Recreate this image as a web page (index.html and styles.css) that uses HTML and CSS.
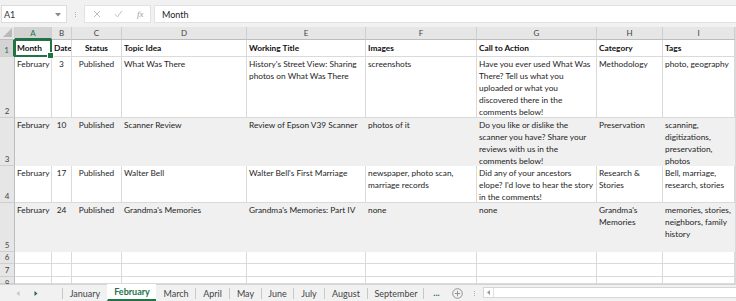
FILE: index.html
```html
<!DOCTYPE html>
<html>
<head>
<meta charset="utf-8">
<link rel="stylesheet" href="styles.css">
</head>
<body>
<div class="app">
  <div class="fbar">
    <div class="namebox"><span>A1</span><svg class="dd" width="6" height="4" viewBox="0 0 6 4"><path d="M0 0 L6 0 L3 3.5 Z" fill="#8a8a8a"/></svg></div>
    <div class="vdots"><i></i><i></i><i></i></div>
    <div class="fxbtns">
      <svg width="8" height="8" viewBox="0 0 8 8"><path d="M1 1 L7 7 M7 1 L1 7" stroke="#b5b5b5" stroke-width="0.9" fill="none"/></svg>
      <svg width="9" height="8" viewBox="0 0 9 8"><path d="M1 4.3 L3.4 6.8 L8 1" stroke="#b5b5b5" stroke-width="0.9" fill="none"/></svg>
      <span class="fx">fx</span>
    </div>
    <div class="formula">Month</div>
  </div>

  <div class="grid">
    <div class="corner"><svg width="9" height="9" viewBox="0 0 9 9"><path d="M9 0 L9 9 L0 9 Z" fill="#b9b9b9"/></svg></div>
    <div class="ch active">A</div><div class="ch">B</div><div class="ch">C</div><div class="ch">D</div><div class="ch">E</div><div class="ch">F</div><div class="ch">G</div><div class="ch">H</div><div class="ch">I</div>

    <div class="rh active">1</div>
    <div class="c hd sel">Month</div>
    <div class="c hd">Date</div>
    <div class="c hd ctr">Status</div>
    <div class="c hd">Topic Idea</div>
    <div class="c hd">Working Title</div>
    <div class="c hd">Images</div>
    <div class="c hd">Call to Action</div>
    <div class="c hd">Category</div>
    <div class="c hd">Tags</div>

    <div class="rh">2</div>
    <div class="c">February</div>
    <div class="c ctr">3</div>
    <div class="c ctr">Published</div>
    <div class="c">What Was There</div>
    <div class="c">History's Street View: Sharing<br>photos on What Was There</div>
    <div class="c">screenshots</div>
    <div class="c">Have you ever used What Was<br>There? Tell us what you<br>uploaded or what you<br>discovered there in the<br>comments below!</div>
    <div class="c">Methodology</div>
    <div class="c">photo, geography</div>

    <div class="rh">3</div>
    <div class="c g">February</div>
    <div class="c g ctr">10</div>
    <div class="c g ctr">Published</div>
    <div class="c g">Scanner Review</div>
    <div class="c g">Review of Epson V39 Scanner</div>
    <div class="c g">photos of it</div>
    <div class="c g">Do you like or dislike the<br>scanner you have? Share your<br>reviews with us in the<br>comments below!</div>
    <div class="c g">Preservation</div>
    <div class="c g">scanning,<br>digitizations,<br>preservation,<br>photos</div>

    <div class="rh">4</div>
    <div class="c">February</div>
    <div class="c ctr">17</div>
    <div class="c ctr">Published</div>
    <div class="c">Walter Bell</div>
    <div class="c">Walter Bell's First Marriage</div>
    <div class="c">newspaper, photo scan,<br>marriage records</div>
    <div class="c">Did any of your ancestors<br>elope? I'd love to hear the story<br>in the comments!</div>
    <div class="c">Research &amp;<br>Stories</div>
    <div class="c">Bell, marriage,<br>research, stories</div>

    <div class="rh">5</div>
    <div class="c g">February</div>
    <div class="c g ctr">24</div>
    <div class="c g ctr">Published</div>
    <div class="c g">Grandma's Memories</div>
    <div class="c g">Grandma's Memories: Part IV</div>
    <div class="c g">none</div>
    <div class="c g">none</div>
    <div class="c g">Grandma's<br>Memories</div>
    <div class="c g">memories, stories,<br>neighbors, family<br>history</div>

    <div class="rh">6</div>
    <div class="c"></div><div class="c"></div><div class="c"></div><div class="c"></div><div class="c"></div><div class="c"></div><div class="c"></div><div class="c"></div><div class="c"></div>
    <div class="rh">7</div>
    <div class="c"></div><div class="c"></div><div class="c"></div><div class="c"></div><div class="c"></div><div class="c"></div><div class="c"></div><div class="c"></div><div class="c"></div>
    <div class="rh cut">8</div>
    <div class="c"></div><div class="c"></div><div class="c"></div><div class="c"></div><div class="c"></div><div class="c"></div><div class="c"></div><div class="c"></div><div class="c"></div>
  </div>

  <div class="tabs">
    <div class="nav">
      <svg width="4" height="5" viewBox="0 0 4 5"><path d="M3.5 0 L3.5 5 L0.5 2.5 Z" fill="#c4c4c4"/></svg>
      <svg width="4" height="5" viewBox="0 0 4 5"><path d="M0.5 0 L0.5 5 L3.5 2.5 Z" fill="#2a6a45"/></svg>
    </div>
    <div class="tab w45">January</div>
    <div class="tab w49 on">February</div>
    <div class="tab w39">March</div>
    <div class="tab w34">April</div>
    <div class="tab w32">May</div>
    <div class="tab w32">June</div>
    <div class="tab w31">July</div>
    <div class="tab w43">August</div>
    <div class="tab w57">September</div>
    <div class="more">...</div>
    <div class="add"><svg width="11" height="11" viewBox="0 0 11 11"><circle cx="5.5" cy="5.5" r="4.8" fill="none" stroke="#8a8a8a" stroke-width="0.9"/><path d="M5.5 2.8 V8.2 M2.8 5.5 H8.2" stroke="#8a8a8a" stroke-width="0.9"/></svg></div>
    <div class="vdots small"><i></i><i></i><i></i></div>
    <div class="hscroll">
      <div class="arr"><svg width="3" height="5" viewBox="0 0 3 5"><path d="M3 0 L3 5 L0 2.5 Z" fill="#9a9a9a"/></svg></div>
      <div class="track"></div>
    </div>
  </div>
</div>
</body>
</html>
```

FILE: styles.css
```css
* { box-sizing: border-box; }
html, body { margin: 0; padding: 0; background: #fff; }
body { width: 736px; height: 301px; overflow: hidden; }
.app { width: 736px; height: 301px; display: flex; flex-direction: column; background: #f1f1f1; font-family: "Lato", "Open Sans", sans-serif; }

/* formula bar */
.fbar { height: 27px; display: flex; align-items: flex-start; padding-top: 5px; background: #f1f1f1; }
.namebox { width: 66px; height: 18px; margin-left: 1px; background: #fff; border: 1px solid #dcdcdc; display: flex; align-items: center; justify-content: space-between; padding: 0 5px 0 2px; font-size: 9px; color: #333; }
.namebox .dd { margin-top: 1px; }
.vdots { width: 17px; height: 18px; display: flex; flex-direction: column; align-items: center; justify-content: center; gap: 1px; }
.vdots i { display: block; width: 1px; height: 1px; background: #b0b0b0; }
.fxbtns { width: 67px; height: 18px; background: #fff; border: 1px solid #e2e2e2; display: flex; align-items: center; padding-left: 8px; gap: 13px; }
.fxbtns .fx { font-family: "Liberation Serif", serif; font-style: italic; font-size: 9px; color: #9a9a9a; margin-left: 1px; }
.formula { flex: 1; height: 18px; margin-left: 3px; background: #fff; border: 1px solid #e2e2e2; border-right: none; font-size: 9px; color: #222; display: flex; align-items: center; padding-left: 7px; }

/* grid */
.grid { display: grid; grid-template-columns: 15px 37px 20px 50px 125px 119px 111px 120px 66px 72px; grid-template-rows: 13px 17px 61px 48px 37px 49px 12px 13px 7px; width: 736px; height: 257px; background: #fff; overflow: hidden; border-right: 1px solid #dadada; }
.corner { background: #e6e6e6; border-right: 1px solid #cfcfcf; border-bottom: 1px solid #bdbdbd; display: flex; align-items: flex-end; justify-content: flex-end; padding: 0 2px 2px 0; }
.ch { background: #e6e6e6; border-right: 1px solid #cfcfcf; border-bottom: 1px solid #bdbdbd; font-size: 8px; color: #444; text-align: center; line-height: 12px; }
.ch.active { background: #d3d3d3; color: #217346; border-bottom: 2px solid #217346; }
.rh { background: #e6e6e6; border-right: 1px solid #bdbdbd; border-bottom: 1px solid #cfcfcf; font-size: 8px; color: #444; display: flex; align-items: flex-end; justify-content: center; padding-bottom: 1px; line-height: 10px; }
.rh.active { background: #d3d3d3; color: #217346; border-right: 2px solid #217346; }
.rh.cut { align-items: flex-start; padding-top: 1px; }

.c { border-right: 1px solid #dadada; border-bottom: 1px solid #dadada; font-size: 8.3px; line-height: 12px; color: #1e1e1e; padding: 1px 0 0 2px; white-space: nowrap; overflow: hidden; }
.c.ctr { text-align: center; padding-left: 0; }
.c.hd { font-weight: 700; display: flex; align-items: flex-end; padding-bottom: 2px; color: #111; }
.c.hd.ctr { justify-content: center; }
.c.g { background: #f0f0f0; border-right-color: #f0f0f0; border-bottom-color: #f0f0f0; }
.c.sel { position: relative; overflow: visible; }
.c.sel::after { content: ""; position: absolute; left: -1px; top: -1px; right: -1px; bottom: -1px; border: 2px solid #217346; }
.c.sel::before { content: ""; position: absolute; right: -3px; bottom: -3px; width: 5px; height: 5px; background: #217346; border: 1px solid #fff; z-index: 2; }

/* tabs */
.tabs { height: 17px; display: flex; align-items: stretch; background: #f1f1f1; border-top: 1px solid #d4d4d4; font-size: 9px; color: #444; }
.nav { width: 62px; display: flex; align-items: center; padding-left: 16px; gap: 14px; }
.tab { display: flex; align-items: center; justify-content: center; position: relative; border-left: 1px solid transparent; }
.tab::before { content: ""; position: absolute; left: -1px; top: 3px; height: 11px; width: 1px; background: #c8c8c8; }
.tab.on { background: #fff; color: #217346; font-weight: 700; border-bottom: 2px solid #217346; margin-top: -1px; }
.tab.on::before, .tab.on + .tab::before { display: none; }
.w45 { width: 45px; } .w49 { width: 49px; } .w39 { width: 39px; } .w34 { width: 34px; } .w32 { width: 32px; } .w31 { width: 31px; } .w43 { width: 43px; } .w57 { width: 57px; }
.more { width: 25px; position: relative; display: flex; align-items: center; justify-content: center; color: #217346; font-weight: 700; font-size: 9px; padding-bottom: 2px; }
.more::before { content: ""; position: absolute; left: -1px; top: 3px; height: 11px; width: 1px; background: #c8c8c8; }
.add { width: 16px; display: flex; align-items: center; justify-content: center; }
.vdots.small { width: 18px; height: auto; }
.hscroll { flex: 1; margin: 2px 0 3px; background: #fff; border: 1px solid #d6d6d6; border-right: none; display: flex; }
.arr { width: 10px; display: flex; align-items: center; justify-content: center; border-right: 1px solid #e0e0e0; }
.track { flex: 1; }
```
